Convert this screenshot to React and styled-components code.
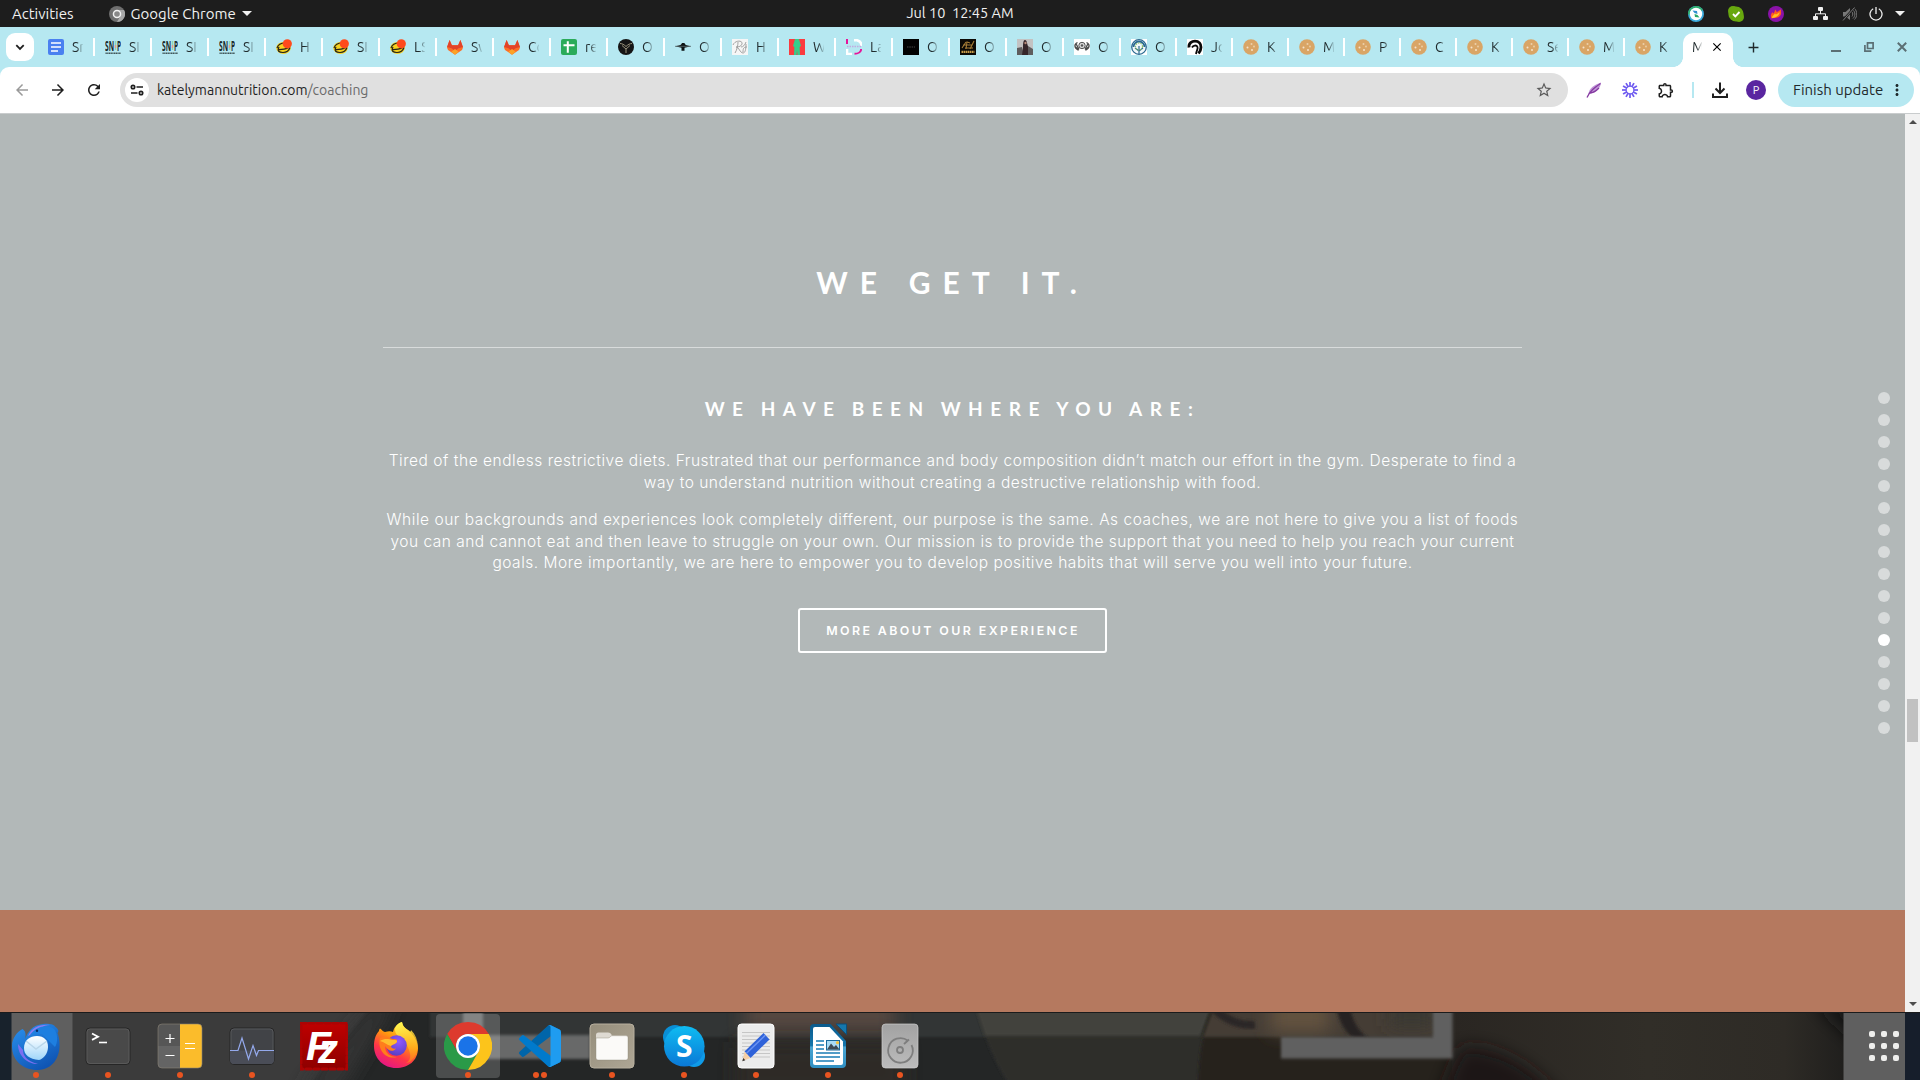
import React from "react";
import styled, { createGlobalStyle } from "styled-components";
import {
  MdArrowBack,
  MdArrowForward,
  MdRefresh,
  MdStarBorder,
  MdClose,
  MdAdd,
  MdMoreVert,
  MdOutlineExtension,
} from "react-icons/md";

const UI_FONT = "Ubuntu, 'Noto Sans', 'Open Sans', sans-serif";
const STRIP = "#b6e8f1";

const GlobalStyle = createGlobalStyle`
  *, *::before, *::after { box-sizing: border-box; }
  html, body { margin: 0; padding: 0; }
  body { width: 1920px; height: 1080px; overflow: hidden; background: #1d1d1d; font-family: ${UI_FONT}; }
  h1, h2, p { margin: 0; }
  svg { display: block; flex: none; }
`;

const Desktop = styled.div`
  width: 1920px;
  height: 1080px;
  display: flex;
  flex-direction: column;
  overflow: hidden;
`;

/* ---------- system bar ---------- */

const SystemBar = styled.header`
  height: 27px;
  flex: none;
  display: grid;
  grid-template-columns: 1fr auto 1fr;
  align-items: center;
  background: #1d1d1d;
  color: #f0f0f0;
  font-size: 15px;
  line-height: 27px;
  white-space: pre;
`;

const BarLeft = styled.div`
  display: flex;
  align-items: center;
  padding-left: 12px;
`;

const AppMenu = styled.div`
  display: flex;
  align-items: center;
  margin-left: 35px;
  gap: 6px;
`;

const Clock = styled.div`
  height: 27px;
  line-height: 26px;
  font-size: 14.5px;
`;

const BarRight = styled.div`
  display: flex;
  align-items: center;
  justify-content: flex-end;
  padding-right: 15px;
`;

const Tray = styled.div`
  display: flex;
  gap: 24px;
  margin-right: 29px;
`;

const StatusIcons = styled.div`
  display: flex;
  align-items: center;
  gap: 12px;
  svg:first-child {
    margin-right: 2px;
  }
`;

const Caret = styled.i`
  border: 5px solid transparent;
  border-top-color: #f0f0f0;
  border-bottom: 0;
  margin-left: ${(p) => p.$gap || 0}px;
`;

/* ---------- tab strip ---------- */

const TabStrip = styled.div`
  height: 40px;
  flex: none;
  display: flex;
  align-items: flex-start;
  padding: 6px 13px 0 6px;
  background: ${STRIP};
`;

const TabSearch = styled.button`
  width: 28px;
  height: 28px;
  margin-right: 4px;
  padding: 0;
  border: 0;
  border-radius: 9px;
  background: #fff;
  color: #1f1f1f;
  display: flex;
  align-items: center;
  justify-content: center;
`;

const Tab = styled.div`
  width: ${(p) => p.$width}px;
  height: 28px;
  flex: none;
  display: flex;
  align-items: center;
  padding-left: 10px;
  border-right: 2px solid ${(p) => (p.$last ? "transparent" : "#fff")};
  border-image: ${(p) =>
    p.$last ? "none" : "linear-gradient(transparent 6px, #fff 6px, #fff 22px, transparent 22px) 1"};
`;

const TabLabel = styled.span`
  width: 11px;
  height: 20px;
  margin-left: 8px;
  overflow: hidden;
  white-space: nowrap;
  font-size: 14px;
  line-height: 20px;
  color: #1f2a2c;
  mask-image: linear-gradient(90deg, #000 45%, transparent 105%);
`;

const ActiveTab = styled.div`
  width: 50px;
  height: 34px;
  flex: none;
  display: flex;
  align-items: center;
  gap: 8px;
  margin-left: 2px;
  padding: 0 0 6px 9px;
  border-radius: 10px 10px 0 0;
  background: #fff;
  position: relative;

  &::before,
  &::after {
    content: "";
    position: absolute;
    bottom: 0;
    width: 10px;
    height: 10px;
  }
  &::before {
    left: -10px;
    background: radial-gradient(circle at 0 0, transparent 9.6px, #fff 10.2px);
  }
  &::after {
    right: -10px;
    background: radial-gradient(circle at 100% 0, transparent 9.6px, #fff 10.2px);
  }
  ${TabLabel} {
    margin-left: 0;
    width: 10px;
  }
`;

const NewTab = styled.div`
  height: 28px;
  display: flex;
  align-items: center;
  margin-left: 12px;
  color: #1f2a2c;
`;

const WindowControls = styled.div`
  height: 28px;
  margin-left: auto;
  display: flex;
  align-items: center;
  gap: 23px;
`;

/* ---------- toolbar ---------- */

const Toolbar = styled.div`
  height: 47px;
  flex: none;
  display: flex;
  align-items: center;
  padding: 0 6px 1px 13px;
  border-radius: 9px 9px 0 0;
  border-bottom: 1px solid #c9cccd;
  background: #fff;
`;

const ToolbarBack = styled.div`
  background: ${STRIP};
  flex: none;
`;

const NavButtons = styled.div`
  display: flex;
  gap: 18px;
  margin-right: 17px;
  color: #1f1f1f;
  svg:first-child {
    color: #9a9a9a;
  }
`;

const Omnibox = styled.div`
  width: 1448px;
  height: 34px;
  flex: none;
  display: flex;
  align-items: center;
  padding: 0 15px 0 5px;
  border-radius: 17px;
  background: #e0e0e0;
  font-size: 14px;
  color: #1f1f1f;
`;

const SiteInfo = styled.div`
  width: 24px;
  height: 24px;
  margin-right: 8px;
  border-radius: 50%;
  background: #fff;
  display: flex;
  align-items: center;
  justify-content: center;
`;

const UrlPath = styled.span`
  flex: 1;
  color: #6a6a6a;
`;

const Extensions = styled.div`
  flex: none;
  display: flex;
  align-items: center;
  gap: 18px;
  margin-left: 17px;
  color: #1f1f1f;
`;

const Divider = styled.span`
  width: 2px;
  height: 16px;
  background: ${STRIP};
  margin: 0 -1px;
`;

const Avatar = styled.span`
  width: 20px;
  height: 20px;
  margin-left: -1px;
  border-radius: 50%;
  background: #5a26a0;
  color: #fff;
  font-size: 11px;
  line-height: 20px;
  text-align: center;
`;

const UpdateButton = styled.button`
  width: 136px;
  height: 34px;
  flex: none;
  margin-left: 12px;
  padding: 0 8px 0 15px;
  border: 0;
  border-radius: 17px;
  background: ${STRIP};
  color: #1f2a2c;
  font: 15px ${UI_FONT};
  display: flex;
  align-items: center;
  justify-content: space-between;
  white-space: nowrap;
`;

/* ---------- page ---------- */

const Viewport = styled.div`
  height: 898px;
  flex: none;
  display: flex;
`;

const Page = styled.main`
  width: 1905px;
  display: flex;
  flex-direction: column;
  position: relative;
`;

const Section = styled.section`
  height: 796px;
  padding: 149px 383px 0;
  background: #b2b8b8;
  color: #fff;
  text-align: center;
  white-space: nowrap;
`;

const NextSection = styled.section`
  flex: 1;
  background: #b5795f;
`;

const Title = styled.h1`
  font: 700 30px/38px Lato, "Open Sans", sans-serif;
  letter-spacing: 12px;
  word-spacing: 0.5px;
`;

const Rule = styled.hr`
  height: 1px;
  margin: 46px 0 49px;
  border: 0;
  background: #d8dbdb;
`;

const Subtitle = styled.h2`
  font: 700 19px/24px Lato, "Open Sans", sans-serif;
  letter-spacing: 7.5px;
  word-spacing: -2px;
  margin-bottom: 29px;
`;

const Paragraph = styled.p`
  font: 350 15.5px/21.7px Inter, "Liberation Sans", sans-serif;
  margin-bottom: 15.6px;
`;

const Line = styled.span`
  display: block;
  letter-spacing: ${(p) => p.$tracking}px;
`;

const CallToAction = styled.a`
  width: 309px;
  height: 45px;
  margin: 34px auto 0;
  padding-left: 1px;
  display: flex;
  align-items: center;
  justify-content: center;
  border: 2px solid #fff;
  border-radius: 3px;
  font: 600 12.4px/20px Inter, "Liberation Sans", sans-serif;
  letter-spacing: 2.4px;
`;

const SideNav = styled.nav`
  position: absolute;
  right: 15px;
  top: 278px;
  display: flex;
  flex-direction: column;
  gap: 10px;
`;

const SideDot = styled.span`
  width: 12px;
  height: 12px;
  border-radius: 50%;
  background: ${(p) => (p.$active ? "#fff" : "#d8dbdb")};
`;

const Scrollbar = styled.div`
  width: 15px;
  background: #f1f1f1;
  display: flex;
  flex-direction: column;
  align-items: center;
`;

const ScrollArrow = styled.i`
  border: 4px solid transparent;
  ${(p) => (p.$up ? "border-bottom-color: #4d4d4d; border-top: 0; margin-top: 6px;" : "border-top-color: #4d4d4d; border-bottom: 0; margin: auto 0 6px;")}
`;

const ScrollThumb = styled.div`
  width: 11px;
  height: 43px;
  margin-top: 575px;
  background: #c1c1c1;
`;

/* ---------- dock ---------- */

const Dock = styled.footer`
  flex: 1;
  position: relative;
  display: flex;
  align-items: stretch;
  overflow: hidden;
  background: #2b2b2a;
`;

const Wallpaper = styled.svg`
  position: absolute;
  inset: 0;
`;

const DockItem = styled.div`
  width: 72px;
  position: relative;
  display: flex;
  flex-direction: column;
  align-items: center;
  padding-top: 10px;
`;

const ActiveItem = styled(DockItem)`
  &::before {
    content: "";
    position: absolute;
    inset: 2px 4px;
    border-radius: 4px;
    background: rgba(255, 255, 255, 0.18);
  }
  > * {
    position: relative;
  }
`;

const Running = styled.div`
  display: flex;
  gap: 2.6px;
`;

const RunningDot = styled.i`
  width: 6px;
  height: 6px;
  border-radius: 50%;
  background: #e95420;
`;

const AppGrid = styled.div`
  position: relative;
  display: grid;
  grid-template-columns: repeat(3, 6px);
  grid-auto-rows: 6px;
  gap: 6px;
  margin: 19px 21px 0 auto;
`;

const AppGridDot = styled.i`
  border-radius: 2px;
  background: #eeeeec;
`;

/* ---------- favicons ---------- */

const Fav = ({ children }) => (
  <svg width="16" height="16" viewBox="0 0 16 16">
    {children}
  </svg>
);

const favicons = {
  docs: (
    <Fav>
      <rect width="16" height="16" rx="2" fill="#4a80f0" />
      <path d="M3 4h10M3 8h10M3 12h7" stroke="#fff" strokeWidth="1.7" />
    </Fav>
  ),
  snip: (
    <Fav>
      <text x="0" y="12" fontSize="14" fontWeight="700" fontFamily="'Open Sans', sans-serif" textLength="9" lengthAdjust="spacingAndGlyphs" fill="#1a2a2c">SN</text>
      <text x="12" y="12" fontSize="14" fontWeight="700" fontFamily="'Open Sans', sans-serif" textLength="4" lengthAdjust="spacingAndGlyphs" fill="#1a2a2c">P</text>
      <path d="M10.5 2v9" stroke="#8ed6b4" strokeWidth="1.4" />
      <path d="M10.5 6v3" stroke="#e79a8c" strokeWidth="1.4" />
      <path d="M0.5 14.2h15.5" stroke="#40565a" strokeWidth="1.5" strokeDasharray="1.3 .4" />
    </Fav>
  ),
  bee: (
    <Fav>
      <ellipse cx="7.500" cy="9" rx="7.300" ry="6" fill="#f7d21e" />
      <path d="M1 9C2 6 5 4 9 4M2 11c3-1 8 0 11-3M3 8c-2 4 0 5.500 4 5.500s6-2 7-5" stroke="#26241a" strokeWidth="1.200" fill="none" />
      <circle cx="11.300" cy="4.800" r="4.600" fill="#ff4a1c" />
    </Fav>
  ),
  gitlab: (
    <Fav>
      <path d="M0 8.6L2.6 1l2.3 5.2h6.2L13.4 1 16 8.6 15 11 8 15.7 1 11z" fill="#fc6d26" />
      <path d="M0 8L2.6 1l2.3 5.2h6.2L13.4 1 16 8l-4.5 1.2L8 12 4.5 9.2z" fill="#e24329" />
      <path d="M4.3 12.8L8 10l3.7 2.8L8 15.7z" fill="#fca326" />
    </Fav>
  ),
  sheets: (
    <Fav>
      <rect width="16" height="16" rx="2" fill="#2bab5a" />
      <path d="M2.5 6.3h11M6.8 2.3v11.4" stroke="#fff" strokeWidth="2" />
    </Fav>
  ),
  ram: (
    <Fav>
      <circle cx="8" cy="8" r="8" fill="#151515" />
      <path d="M2 4.500C4 4.500 6 5.500 8 7.500c2-2 4-3 6-3M4 6.500l4 3.500 4-3.500M8 10v4" stroke="#a89f86" strokeWidth=".9" fill="none" />
    </Fav>
  ),
  hat: (
    <Fav>
      <path d="M0 7.300C4 6.500 6 6.500 7 4h2.400c1 2.500 3 2.500 6.600 3.300L9.500 8.800v3H6.500v-3z" fill="#0d1314" />
      <path d="M0 7.300h16" stroke="#5d7275" strokeWidth=".8" />
    </Fav>
  ),
  script: (
    <Fav>
      <rect width="16" height="16" fill="#f6f6f6" />
      <path d="M3 14c2-3 3-8 3-11M1 6c2-5 10-5 9-1-1 3-5 3-6 3 3 0 4 6 7 6 2 0 3-3 3-9M9 8c2 0 4-2 5-5M11 13c0-4 1-5 4-5" stroke="#9a9a9a" strokeWidth=".9" fill="none" />
    </Fav>
  ),
  woman: (
    <Fav>
      <rect width="16" height="16" fill="#fb3b3f" />
      <path d="M6 0h4l2 7-1.400 1L11 16H8.500L8 11l-.5 5H5l.4-8L4 7z" fill="#33cf8c" />
    </Fav>
  ),
  lab: (
    <Fav>
      <path d="M8 1.200h3A6 6 0 0 1 15.500 7M1 10v5h5" stroke="#fff" strokeWidth="2.600" fill="none" />
      <rect x="0" y="0" width="2" height="5" fill="#e6149a" />
      <path d="M8.500 14.800C12 14.800 15 13 15.200 10" stroke="#e6149a" strokeWidth="2" fill="none" />
      <path d="M1 7.500h14" stroke="#c3a9e0" strokeWidth="1.600" strokeDasharray="1.500 1" />
    </Fav>
  ),
  black: (
    <Fav>
      <rect width="16" height="16" fill="#020202" />
      <path d="M4 8h8" stroke="#444" strokeWidth="1.200" strokeDasharray="1.500 .8" />
    </Fav>
  ),
  gold: (
    <Fav>
      <rect width="16" height="16" fill="#0c0a06" />
      <path d="M2 9l4-6M6 10l1-7 3 1M10 10l4-8M3 6h9M5 9h8" stroke="#a57c36" strokeWidth="1.100" />
      <path d="M1.500 12.800h13" stroke="#c89b49" strokeWidth="2.200" strokeDasharray="1.600 .5" />
    </Fav>
  ),
  photo: (
    <Fav>
      <rect width="16" height="16" fill="#c3c2c2" />
      <path d="M0 9l5-1 2 8H0zM11 7l5 3v6h-6z" fill="#5f5d5e" />
      <path d="M8 1c2 0 2 4 3 6v9H5l1-7c0-3 0-8 2-8z" fill="#35262a" />
      <circle cx="8.500" cy="4" r="1.200" fill="#b78b7b" />
    </Fav>
  ),
  crest: (
    <Fav>
      <rect width="16" height="16" fill="#fff" />
      <path d="M3.500 3.500C0 5 0 9 4 11M12.500 3.500C16 5 16 9 12 11M2 5c1 1 2 4 3 5M14 5c-1 1-2 4-3 5M1.500 8L5 11M14.500 8L11 11" stroke="#4a4a4a" strokeWidth="1.300" fill="none" />
      <circle cx="8" cy="6.500" r="3.200" stroke="#555" fill="#d7d7d7" />
      <circle cx="8" cy="6.500" r="1.200" fill="#555" />
    </Fav>
  ),
  tree: (
    <Fav>
      <rect width="16" height="16" fill="#fff" />
      <circle cx="8" cy="8" r="7.300" stroke="#2a6a91" strokeWidth="1.300" fill="#f1f8fb" />
      <path d="M8 15V7M8 12L4 9M8 12l4-3" stroke="#2a6a91" strokeWidth="1.200" />
      <path d="M2.500 8A5.500 5.500 0 0 1 13.500 8" stroke="#2a6a91" strokeWidth="1.800" fill="none" />
      <circle cx="8" cy="7.500" r="3.500" fill="none" stroke="#8fc06b" strokeWidth="1.200" strokeDasharray="1.500 1" />
    </Fav>
  ),
  horse: (
    <Fav>
      <rect width="16" height="16" fill="#fff" />
      <path d="M2 8.500C1.500 4 5 2.200 8 2.200c4 0 6 2.800 6 6 0 2.500-1 4.300-2.500 6.300" stroke="#0a0a0a" strokeWidth="2.800" fill="none" />
      <path d="M5 8.500c1-2 4.500-3 5.500-.5.700 2-1 3.500-1.500 7" stroke="#0a0a0a" strokeWidth="1.800" fill="none" />
    </Fav>
  ),
  cookie: (
    <Fav>
      <circle cx="8" cy="8" r="7.800" fill="#d9a566" />
      <circle cx="4.500" cy="8.500" r="1" fill="#f5e3cb" />
      <circle cx="8.500" cy="5" r="1" fill="#ecd0aa" />
      <circle cx="9" cy="11" r="1" fill="#f5e3cb" />
      <circle cx="11" cy="7.500" r=".9" fill="#ecd0aa" />
    </Fav>
  ),
};

const tabs = [
  ["docs", "Sn"], ["snip", "SI"], ["snip", "SI"], ["snip", "SI"],
  ["bee", "H"], ["bee", "SI"], ["bee", "LS"], ["gitlab", "Sw"],
  ["gitlab", "Co"], ["sheets", "re"], ["ram", "O"], ["hat", "O"],
  ["script", "H"], ["woman", "W"], ["lab", "La"], ["black", "O"],
  ["gold", "O"], ["photo", "O"], ["crest", "O"], ["tree", "O"],
  ["horse", "Jo"], ["cookie", "K"], ["cookie", "M"], ["cookie", "P"],
  ["cookie", "C"], ["cookie", "K"], ["cookie", "Se"], ["cookie", "M"],
  ["cookie", "K"],
];

/* ---------- tray and toolbar drawings ---------- */

const GrayChrome = () => (
  <svg width="16" height="16" viewBox="0 0 16 16">
    <circle cx="8" cy="8" r="8" fill="#6f6f6f" />
    <path d="M8 4h7A8 8 0 0 1 8 16l3.400-6z" fill="#a9a9a9" />
    <circle cx="8" cy="8" r="4.300" fill="#f2f2f2" />
    <circle cx="8" cy="8" r="2.800" fill="#888" />
  </svg>
);

const SyncBadge = () => (
  <svg width="16" height="16" viewBox="0 0 16 16">
    <circle cx="8" cy="8" r="8" fill="#3aa9dc" />
    <path d="M1 8.500A7 7 0 0 1 14 4.500" stroke="#2fae6e" strokeWidth="2" fill="none" />
    <circle cx="8" cy="8" r="6.200" fill="#fff" />
    <path d="M4.500 4.500L9 5l.5 3-3-1z" fill="#2f8fd0" />
    <path d="M11.500 11.500L7 11l-.5-3 3 1z" fill="#29a868" />
  </svg>
);

const SkypeOnline = () => (
  <svg width="16" height="16" viewBox="0 0 16 16">
    <circle cx="8" cy="8" r="7.600" fill="#68a80f" />
    <circle cx="5" cy="5" r="5" fill="#68a80f" />
    <circle cx="11" cy="11" r="5" fill="#68a80f" />
    <path d="M5 8l2.300 2.300L11.500 6" stroke="#fff" strokeWidth="1.900" fill="none" />
  </svg>
);

const FlameBadge = () => (
  <svg width="16" height="16" viewBox="0 0 16 16">
    <circle cx="8" cy="8" r="8" fill="#8a12a8" />
    <path d="M3.500 12.500C2 9.500 3.500 7.500 4.500 6c.3 1 .6 1.300 1 1.500C6.500 6 7 5 7 3.500 8.300 4.500 8.500 5.500 8.700 6.200 10 5.500 11.500 4.500 13 3.300 12.500 5.500 14 7 12.300 9.500 10.500 12.300 6.500 11.300 3.500 12.500z" fill="#ff5a1f" />
    <path d="M4 12c0-2.500 2-3 3-4.500.3.700.8 1 1.500.8C9.800 7.500 10.500 7 11.500 6c.3 2.500-2 5.500-7.500 6z" fill="#ffc21f" />
  </svg>
);

const NetworkIcon = () => (
  <svg width="15" height="14" viewBox="0 0 15 14" fill="#f0f0f0">
    <rect x="5" y="0" width="5" height="4" rx="1" />
    <rect x="0" y="9" width="5" height="4" rx="1" />
    <rect x="10" y="9" width="5" height="4" rx="1" />
    <path d="M7.500 4v3M2.500 9.500V6.800h10v2.700" stroke="#f0f0f0" fill="none" />
  </svg>
);

const MutedIcon = () => (
  <svg width="15" height="14" viewBox="0 0 15 14">
    <path d="M1 5h2.500L8 1v12L3.500 9.500H1z" fill="#787878" />
    <path d="M10 5c1 1 1 3 0 4.500M11 3c2.500 2 2.500 6 0 8.500M12.500 1.500c3 3 3 8 0 11" stroke="#787878" fill="none" />
    <path d="M1 13.500L12 1" stroke="#1d1d1d" strokeWidth="2.400" />
    <path d="M1 13.500L12.500.5" stroke="#787878" />
  </svg>
);

const PowerIcon = () => (
  <svg width="14" height="14" viewBox="0 0 14 14" fill="none" stroke="#f0f0f0" strokeWidth="1.300">
    <path d="M4.200 1.800a6 6 0 1 0 5.600 0M7 0v7" />
  </svg>
);

const ChevronDown = () => (
  <svg width="10" height="10" viewBox="0 0 10 10">
    <path d="M1.300 3.200L5 6.900l3.700-3.700" stroke="#1f1f1f" strokeWidth="1.800" fill="none" />
  </svg>
);

const SiteIcon = () => (
  <svg width="14" height="12" viewBox="0 0 14 12" fill="none" stroke="#1f1f1f" strokeWidth="1.700">
    <circle cx="3" cy="3" r="1.700" />
    <circle cx="11" cy="9" r="1.700" />
    <path d="M6.500 3H13M1 9h6.500" />
  </svg>
);

const Feather = () => (
  <svg width="18" height="18" viewBox="0 0 18 18">
    <path d="M3.500 13C4 7 9 4 16 1.500 15.500 7 12 11.500 3.500 13z" fill="#c196d8" />
    <path d="M2 16.500C5 10 9 7 15.500 2.500M5 12c4 0 6-2 9-5" stroke="#8439a0" strokeWidth="1.300" fill="none" />
  </svg>
);

const Burst = () => (
  <svg width="18" height="18" viewBox="0 0 18 18">
    {Array.from({ length: 12 }, (_, i) => (
      <path key={i} d="M9 1v4.500" transform={`rotate(${i * 30} 9 9)`} stroke="#6f5cf0" strokeWidth="1.700" />
    ))}
    <circle cx="9" cy="9" r="3.900" fill="none" stroke="#6f5cf0" strokeWidth="1.100" />
  </svg>
);

const Download = () => (
  <svg width="18" height="18" viewBox="0 0 18 18" fill="none" stroke="#1f1f1f" strokeWidth="2">
    <path d="M9 1.500v10M4.500 7.500L9 12l4.500-4.500M2 12.500V16h14v-3.500" />
  </svg>
);

const Minimize = () => (
  <svg width="10" height="10" viewBox="0 0 10 10">
    <path d="M0 9h10" stroke="#5b6f74" strokeWidth="2" />
  </svg>
);

const Restore = () => (
  <svg width="10" height="10" viewBox="0 0 10 10" fill="none" stroke="#5b6f74" strokeWidth="1.700">
    <path d="M3.500.9h5.600v5.600H3.500zM.9 3v6.100h6.500" />
  </svg>
);

const CloseWindow = () => (
  <svg width="10" height="10" viewBox="0 0 10 10">
    <path d="M.8.8l8.400 8.400M9.200.8L.8 9.200" stroke="#5b6f74" strokeWidth="2" />
  </svg>
);

/* ---------- dock icons ---------- */

const Icon48 = ({ children }) => (
  <svg width="48" height="50" viewBox="0 0 48 50">
    {children}
  </svg>
);

const Thunderbird = () => (
  <Icon48>
    <defs>
      <linearGradient id="tb" x1="0" y1="0" x2=".6" y2="1">
        <stop offset="0" stopColor="#2b93f0" />
        <stop offset="1" stopColor="#0f55b4" />
      </linearGradient>
      <linearGradient id="tbm" x1="0" y1="0" x2="0" y2="1">
        <stop offset="0" stopColor="#fff" />
        <stop offset="1" stopColor="#9fd6fa" />
      </linearGradient>
    </defs>
    <path d="M0 24C0 16 5 10 10.500 7 14 9 14 13 13 17 16 10 20 3 31 2c6-.5 11 0 12.500 3 2 1 4 4 2 6C51 26 46 47 26 48 10 48 0 38 0 24z" fill="url(#tb)" />
    <path d="M16 14c4-9 12-12 22-11-8 0-11 5-10 8-4-1-7 0-12 3z" fill="#8a7df2" />
    <path d="M18 13c6-9 18-11 24-6 4 4 4 14 1 18L30 12z" fill="#1e7fe0" />
    <circle cx="25" cy="8.800" r="1.200" fill="#0a2b66" />
    <path d="M6 22c0 12 9 20 20 20-12-3-15-9-15-14z" fill="#7b6ff0" />
    <path d="M12 26c0-8 6-12 13-12s11 4 11 11-5 12-9 13c-10-1-15-5-15-12z" fill="url(#tbm)" />
    <path d="M14 19l10 8 11-8" stroke="#b9d6ea" strokeWidth="1.500" fill="none" />
  </Icon48>
);

const Terminal = () => (
  <Icon48>
    <rect x="2" y="6" width="44" height="36.500" rx="4" fill="#3f3f3f" stroke="#262626" strokeWidth="1" />
    <rect x="3" y="7" width="42" height="34.500" rx="3" fill="#494949" stroke="#5f5f5f" strokeWidth=".8" />
    <path d="M8 11.500l6 3.200-6 3.200" stroke="#fff" strokeWidth="1.800" fill="none" />
    <path d="M15 20.500h8" stroke="#fff" strokeWidth="1.600" />
  </Icon48>
);

const Calculator = () => (
  <Icon48>
    <defs>
      <clipPath id="calc"><rect x="2" y="2" width="44" height="44" rx="4" /></clipPath>
    </defs>
    <g clipPath="url(#calc)">
      <rect width="24" height="24" fill="#565656" />
      <rect y="24" width="24" height="24" fill="#646464" />
      <rect x="24" width="24" height="48" fill="#fbbc2b" />
    </g>
    <rect x="2" y="2" width="44" height="44" rx="4" fill="none" stroke="#8b8376" strokeOpacity=".6" />
    <path d="M9.500 16.500h9M14 12v9M9.500 33.500h9M29 21.500h10M29 26.500h10" stroke="#fff" strokeWidth="1.200" />
  </Icon48>
);

const Monitor = () => (
  <Icon48>
    <rect x="2" y="6" width="44" height="36.500" rx="4" fill="#414347" stroke="#262626" />
    <rect x="3" y="7" width="42" height="34.500" rx="3" fill="none" stroke="#5c5d61" strokeWidth=".8" />
    <path d="M2 28.500h44V38a4 4 0 0 1-4 4H6a4 4 0 0 1-4-4z" fill="#4a4d57" />
    <path d="M2 28.500h8L14 16l6.500 21L25 23.500l3.500 10 2-5H46" stroke="#94a9ec" strokeWidth="1.200" fill="none" />
  </Icon48>
);

const FileZilla = () => (
  <Icon48>
    <defs>
      <linearGradient id="fz" x1="0" y1="0" x2="0" y2="1">
        <stop offset="0" stopColor="#bf0000" />
        <stop offset="1" stopColor="#8e0000" />
      </linearGradient>
    </defs>
    <rect x="1" y="1" width="46" height="46" fill="url(#fz)" stroke="#ac0303" strokeWidth="3" strokeDasharray="5 3" strokeLinecap="round" />
    <text x="6" y="37.500" fontFamily="'Liberation Sans', sans-serif" fontSize="41" fontWeight="700" fontStyle="italic" fill="#fff">F</text>
    <text x="18" y="41" fontFamily="'Liberation Sans', sans-serif" fontSize="40" fontWeight="700" fontStyle="italic" fill="#fff">z</text>
  </Icon48>
);

const Firefox = () => (
  <Icon48>
    <defs>
      <linearGradient id="ff" x1=".8" y1="0" x2=".3" y2="1">
        <stop offset="0" stopColor="#fff03f" />
        <stop offset=".4" stopColor="#ff980e" />
        <stop offset=".7" stopColor="#ff3647" />
        <stop offset="1" stopColor="#e31587" />
      </linearGradient>
      <radialGradient id="ffg" cx=".6" cy=".3" r=".7">
        <stop offset="0" stopColor="#9059ff" />
        <stop offset="1" stopColor="#5b3fc4" />
      </radialGradient>
      <linearGradient id="ffy" x1=".4" y1="0" x2=".6" y2="1">
        <stop offset="0" stopColor="#fff44f" />
        <stop offset="1" stopColor="#ff980e" stopOpacity=".5" />
      </linearGradient>
    </defs>
    <path d="M2 24C2 17 4 12 7 9c0-1 .5-2 1-2.500 2 1.500 3 3 5 3.500 3-1 6-1 8 0 1-5 4-8 9-10 1 7 6 6 10 12 2 2 6 8 6 14 0 13-10 20-22 20S2 37 2 24z" fill="url(#ff)" />
    <path d="M30 0c1 6 5 7 8 10 1-1 1-2 1-2 9 9 9 23 0 31-1 1-3 2-5 2 8-4 3-14 0-19-3-6-11-8-11-14 0-4 3-7 7-8z" fill="url(#ffy)" />
    <circle cx="24.500" cy="23.500" r="10.300" fill="url(#ffg)" />
    <path d="M8 16c5-3 10 0 13 1 3 0 4 0 4 2 0 3-4 3-6 5 0 2 2 3 5 2.500-3 4-8 2.500-11-2.500 0 7 5 11 12 11-11 3-20-7-17-19z" fill="#ff7d1c" />
    <path d="M8 19c5-3 8-2 13-1 3 0 4 0 4 1 0 3-4 3-6 5-4-1-7-4-11-5z" fill="#ffbd2e" />
  </Icon48>
);

const Chrome = () => (
  <Icon48>
    <path d="M24 12h20.785A24 24 0 0 0 3.215 12l10.393 18A12 12 0 0 1 24 12z" fill="#dd3a2e" />
    <path d="M13.608 30L3.215 12A24 24 0 0 0 24 48l10.392-18a12 12 0 0 1-20.784 0z" fill="#2a9a48" />
    <path d="M34.392 30L24 48a24 24 0 0 0 20.785-36H24a12 12 0 0 1 10.392 18z" fill="#fcc41b" />
    <circle cx="24" cy="24" r="12" fill="#fff" />
    <circle cx="24" cy="24" r="9.700" fill="#1a73e8" />
  </Icon48>
);

const VSCode = () => (
  <Icon48>
    <g transform="translate(3 3) scale(.42)">
      <path d="M96.461 10.796L75.857.876a6.230 6.230 0 0 0-7.107 1.207L1.299 63.583a4.167 4.167 0 0 0 .004 6.162l5.510 5.009a4.167 4.167 0 0 0 5.321.237L93.361 13.370c2.725-2.067 6.639-.124 6.639 3.297v-.24a6.250 6.250 0 0 0-3.539-5.631z" fill="#0065a9" />
      <path d="M96.461 89.204l-20.604 9.920a6.230 6.230 0 0 1-7.107-1.207L1.299 36.417a4.167 4.167 0 0 1 .004-6.162l5.510-5.009a4.167 4.167 0 0 1 5.321-.237L93.361 86.630c2.725 2.067 6.639.124 6.639-3.297v.240a6.250 6.250 0 0 1-3.539 5.631z" fill="#007acc" />
      <path d="M75.858 99.126a6.232 6.232 0 0 1-7.108-1.209C71.056 100.223 75 98.589 75 95.328V4.672C75 1.410 71.056-.223 68.750 2.083A6.232 6.232 0 0 1 75.858.874l20.601 9.907A6.250 6.250 0 0 1 100 16.413v67.174a6.250 6.250 0 0 1-3.541 5.633z" fill="#1f9cf0" />
    </g>
  </Icon48>
);

const Files = () => (
  <Icon48>
    <defs>
      <linearGradient id="fl" x1="0" y1="0" x2="1" y2="1">
        <stop offset="0" stopColor="#958e7c" />
        <stop offset=".5" stopColor="#a29a88" />
        <stop offset="1" stopColor="#aea695" />
      </linearGradient>
    </defs>
    <rect x="2" y="2" width="44" height="44" rx="4" fill="url(#fl)" stroke="#b7af9e" />
    <path d="M8 13a2.500 2.500 0 0 1 2.500-2.500H20c2 0 3 1 4 3H38a2 2 0 0 1 2 2V20H8z" fill="#dedad2" />
    <path d="M8 16h12c2 0 2.500-2.300 4-2.300h14a2 2 0 0 1 2 2V36a2 2 0 0 1-2 2H10a2 2 0 0 1-2-2z" fill="#fbfaf8" stroke="#8a8373" strokeWidth=".4" />
  </Icon48>
);

const Skype = () => (
  <Icon48>
    <defs>
      <linearGradient id="sk" x1="0" y1="0" x2="0" y2="1">
        <stop offset="0" stopColor="#0fbcf2" />
        <stop offset="1" stopColor="#0a78d6" />
      </linearGradient>
    </defs>
    <circle cx="15" cy="15" r="12" fill="#0a8fd6" />
    <circle cx="34" cy="34" r="11" fill="#0f9be8" />
    <circle cx="24.300" cy="24.300" r="20.300" fill="url(#sk)" />
    <text x="24.300" y="35" textAnchor="middle" fontFamily="'Open Sans', sans-serif" fontSize="30" fontWeight="700" fill="#fff">S</text>
  </Icon48>
);

const TextEditor = () => (
  <Icon48>
    <rect x="6" y="2" width="36" height="44" rx="3.500" fill="#ececec" stroke="#fff" />
    <path d="M10 10.500h28M10 14h28M10 17.500h28M10 21h28M10 24.500h28M10 28h28M10 31.500h28M10 35h28" stroke="#c6c6c6" strokeWidth="1" />
    <path d="M12.500 29.500l19-18.500 6 6.500L18.500 36z" fill="#2f62d9" />
    <path d="M12.500 29.500l-2 9.500 8-3z" fill="#f6cfa6" />
    <path d="M14.500 31.300l19-18.300" stroke="#6a93f2" strokeWidth="1.500" />
    <path d="M11.200 36l-.9 3.200 3-1z" fill="#333" />
  </Icon48>
);

const Writer = () => (
  <Icon48>
    <defs>
      <linearGradient id="wr" x1="0" y1="0" x2="0" y2="1">
        <stop offset="0" stopColor="#0a5a8c" />
        <stop offset=".5" stopColor="#1577ad" />
        <stop offset=".52" stopColor="#4aa5d2" />
        <stop offset="1" stopColor="#2f8fc2" />
      </linearGradient>
    </defs>
    <path d="M10 2h16.500L42 19v23a4 4 0 0 1-4 4H10a4 4 0 0 1-4-4V6a4 4 0 0 1 4-4z" fill="url(#wr)" />
    <path d="M32 2h10.500v10.500z" fill="#1577ad" stroke="#0d4f7a" />
    <path d="M11 5h14.500L39 19.500V41a2 2 0 0 1-2 2H11a2 2 0 0 1-2-2V7a2 2 0 0 1 2-2z" fill="#fff" />
    <path d="M12 19h8M12 23h8M12 27h8M12 31h24M12 35h24M12 39h18" stroke="#1a7cb5" strokeWidth="1.700" />
    <rect x="22.500" y="18.500" width="13" height="9.500" fill="#a9dbf5" stroke="#1a6a9c" />
    <path d="M23 27.500l4-6 3 3.500 2-2 3.500 4.500z" fill="#3d4a55" />
    <circle cx="33.500" cy="20.700" r="1.600" fill="#f5c33b" />
  </Icon48>
);

const Disks = () => (
  <Icon48>
    <defs>
      <linearGradient id="dk" x1="0" y1="0" x2="0" y2="1">
        <stop offset="0" stopColor="#a2a2a2" />
        <stop offset="1" stopColor="#bcbcbc" />
      </linearGradient>
    </defs>
    <rect x="6" y="2" width="36" height="44" rx="3.500" fill="url(#dk)" stroke="#cfcfcf" strokeOpacity=".7" />
    <path d="M35.500 23a12.300 12.300 0 1 1-3.500-4.300" stroke="#7e7e7e" strokeWidth="1.800" fill="none" />
    <path d="M33 17.500l-5 4.500" stroke="#7e7e7e" strokeWidth="1.800" />
    <circle cx="24" cy="28" r="3" stroke="#7e7e7e" strokeWidth="1.800" fill="none" />
  </Icon48>
);

const DockWallpaper = () => (
  <Wallpaper width="1920" height="68" viewBox="0 0 1920 68">
    <defs>
      <filter id="soft" x="-40%" y="-80%" width="180%" height="260%"><feGaussianBlur stdDeviation="9" /></filter>
      <filter id="edge" x="-10%" y="-30%" width="120%" height="160%"><feGaussianBlur stdDeviation="1.500" /></filter>
      <linearGradient id="right" x1="0" y1="0" x2="1" y2="0">
        <stop offset="0" stopColor="#2a2622" />
        <stop offset=".5" stopColor="#312e28" />
        <stop offset=".85" stopColor="#2e2b26" />
        <stop offset="1" stopColor="#201f1d" />
      </linearGradient>
    </defs>
    <rect width="1920" height="68" fill="#242626" />
    <rect y="-10" x="430" width="560" height="35" fill="#333635" filter="url(#edge)" />
    <path d="M60 -10H375L305 80H60z" fill="#3b3b3b" filter="url(#edge)" />
    <path d="M375 -10h20L340 80H300z" fill="#343535" filter="url(#soft)" />
    <rect x="745" y="-20" width="150" height="42" fill="#54463f" filter="url(#soft)" />
    <rect x="735" y="30" width="170" height="54" fill="#2f2927" filter="url(#soft)" />
    <path d="M975 -10h245q-20 30-22 90H1015Q990 50 975 -10z" fill="#2d2d2b" filter="url(#edge)" />
    <path d="M975 -6h237l-12 30H985z" fill="#42433e" filter="url(#edge)" />
    <path d="M1215 -10h240v90H1198q0-55 17-90z" fill="#28221f" filter="url(#edge)" />
    <path d="M1216 -10h219v35H1203z" fill="#453c36" filter="url(#edge)" />
    <rect x="1270" y="-12" width="60" height="32" fill="#64533f" filter="url(#soft)" />
    <path d="M1215 -2q18 16 40 15" stroke="#2b2725" strokeWidth="8" fill="none" filter="url(#edge)" />
    <path d="M1336 -4q6 24 18 30h14q-14-10-18-30z" fill="#262423" filter="url(#edge)" />
    <rect x="1390" y="-8" width="44" height="22" fill="#383731" filter="url(#soft)" />
    <rect x="1452" y="0" width="392" height="68" fill="url(#right)" />
    <path d="M1460 36q50-5 100 50H1440z" fill="#1a1918" filter="url(#soft)" />
    <path d="M1815 -10h50v45z" fill="#131313" filter="url(#soft)" />
    <path d="M1281 25h152v-40h19.500v61.500H1281z" fill="#606060" filter="url(#edge)" />
    <path d="M463 -5h20v28h107v24H463z" fill="#686969" filter="url(#edge)" />
    <rect width="12" height="68" fill="#18222c" />
    <rect x="11.500" width="61" height="68" fill="#5f5f5f" />
    <rect x="1843.500" width="61.500" height="68" fill="#5f5f5f" />
    <rect x="1905" width="15" height="68" fill="#161e2b" />
    <rect width="1920" height="1" fill="#1a1b1c" />
  </Wallpaper>
);

const apps = [
  [Thunderbird, 1], [Terminal, 1], [Calculator, 1], [Monitor, 1],
  [FileZilla, 0], [Firefox, 0], [Chrome, 1, true], [VSCode, 2],
  [Files, 1], [Skype, 1], [TextEditor, 1], [Writer, 1], [Disks, 1],
];

export default function App() {
  return (
    <Desktop>
      <GlobalStyle />
      <SystemBar>
        <BarLeft>
          Activities
          <AppMenu>
            <GrayChrome />
            Google Chrome
            <Caret />
          </AppMenu>
        </BarLeft>
        <Clock>{"Jul 10  12:45 AM"}</Clock>
        <BarRight>
          <Tray>
            <SyncBadge />
            <SkypeOnline />
            <FlameBadge />
          </Tray>
          <StatusIcons>
            <NetworkIcon />
            <MutedIcon />
            <PowerIcon />
            <Caret />
          </StatusIcons>
        </BarRight>
      </SystemBar>

      <TabStrip>
        <TabSearch><ChevronDown /></TabSearch>
        {tabs.map(([icon, label], i) => (
          <Tab key={i} $width={i < 19 ? 57 : 56} $last={i === tabs.length - 1}>
            {favicons[icon]}
            <TabLabel>{label}</TabLabel>
          </Tab>
        ))}
        <ActiveTab>
          <TabLabel>M</TabLabel>
          <MdClose size={14} />
        </ActiveTab>
        <NewTab><MdAdd size={17} /></NewTab>
        <WindowControls>
          <Minimize />
          <Restore />
          <CloseWindow />
        </WindowControls>
      </TabStrip>

      <ToolbarBack>
        <Toolbar>
          <NavButtons>
            <MdArrowBack size={18} />
            <MdArrowForward size={18} />
            <MdRefresh size={18} />
          </NavButtons>
          <Omnibox>
            <SiteInfo><SiteIcon /></SiteInfo>
            katelymannutrition.com
            <UrlPath>/coaching</UrlPath>
            <MdStarBorder size={18} color="#5a5a5a" />
          </Omnibox>
          <Extensions>
            <Feather />
            <Burst />
            <MdOutlineExtension size={18} />
            <Divider />
            <Download />
            <Avatar>P</Avatar>
          </Extensions>
          <UpdateButton>
            Finish update
            <MdMoreVert size={18} />
          </UpdateButton>
        </Toolbar>
      </ToolbarBack>

      <Viewport>
        <Page>
          <Section>
            <Title>WE GET IT.</Title>
            <Rule />
            <Subtitle>WE HAVE BEEN WHERE YOU ARE:</Subtitle>
            <Paragraph>
              <Line $tracking={0.53}>Tired of the endless restrictive diets. Frustrated that our performance and body composition didn’t match our effort in the gym. Desperate to find a</Line>
              <Line $tracking={0.49}>way to understand nutrition without creating a destructive relationship with food.</Line>
            </Paragraph>
            <Paragraph>
              <Line $tracking={0.53}>While our backgrounds and experiences look completely different, our purpose is the same. As coaches, we are not here to give you a list of foods</Line>
              <Line $tracking={0.485}>you can and cannot eat and then leave to struggle on your own. Our mission is to provide the support that you need to help you reach your current</Line>
              <Line $tracking={0.515}>goals. More importantly, we are here to empower you to develop positive habits that will serve you well into your future.</Line>
            </Paragraph>
            <CallToAction>MORE ABOUT OUR EXPERIENCE</CallToAction>
          </Section>
          <NextSection />
          <SideNav>
            {Array.from({ length: 16 }, (_, i) => (
              <SideDot key={i} $active={i === 11} />
            ))}
          </SideNav>
        </Page>
        <Scrollbar>
          <ScrollArrow $up />
          <ScrollThumb />
          <ScrollArrow />
        </Scrollbar>
      </Viewport>

      <Dock>
        <DockWallpaper />
        {apps.map(([Art, windows, active], i) => {
          const Item = active ? ActiveItem : DockItem;
          return (
            <Item key={i}>
              <Art />
              <Running>
                {Array.from({ length: windows }, (_, k) => (
                  <RunningDot key={k} />
                ))}
              </Running>
            </Item>
          );
        })}
        <AppGrid>
          {Array.from({ length: 9 }, (_, i) => (
            <AppGridDot key={i} />
          ))}
        </AppGrid>
      </Dock>
    </Desktop>
  );
}
